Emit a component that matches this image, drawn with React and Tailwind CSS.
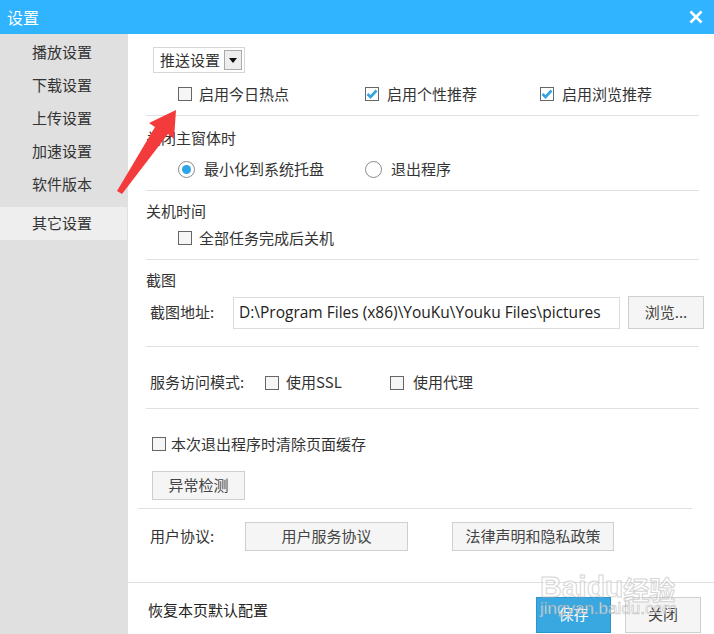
import React from 'react';

const cjk = { fontFamily: '"Noto Sans CJK SC", "Noto Sans", sans-serif' };

function Check({ checked }) {
    return (
        <span className={"inline-flex w-[14px] h-[14px] shrink-0 items-center justify-center border border-[#666] " + (checked ? "bg-white" : "bg-[#f6f6f6]")}>
            {checked && (
                <svg width="12" height="12" viewBox="0 0 12 12">
                    <path d="M1.5 6 L4.5 9 L10.5 2.5" stroke="#36a3df" strokeWidth="2.6" fill="none" />
                </svg>
            )}
        </span>
    );
}

function Radio({ on }) {
    return (
        <span className="inline-flex w-[17px] h-[17px] shrink-0 items-center justify-center rounded-full border border-[#8a8a8a] bg-white">
            {on && <span className="w-[9px] h-[9px] rounded-full bg-[#2ea4e8]" />}
        </span>
    );
}

function Btn({ children, className = "" }) {
    return (
        <div className={"flex items-center justify-center border border-[#cfcfcf] bg-[#f5f5f5] text-[15px] text-[#444] " + className}>
            {children}
        </div>
    );
}

export default function App() {
    const menu = ['播放设置', '下载设置', '上传设置', '加速设置', '软件版本'];

    return (
        <div className="relative w-[714px] h-[634px] overflow-hidden bg-white text-[#333] text-[15px]" style={cjk}>
            {/* title bar */}
            <div className="h-[34px] bg-[#30b4ff] flex items-center justify-between pl-[7px] pr-[11px]">
                <span className="text-white text-[16px]">设置</span>
                <svg width="14" height="14" viewBox="0 0 14 14">
                    <path d="M1.5 1.5 L12.5 12.5 M12.5 1.5 L1.5 12.5" stroke="white" strokeWidth="2.6" />
                </svg>
            </div>

            <div className="flex h-[600px]">
                {/* sidebar */}
                <div className="w-[128px] shrink-0 bg-[#e0e0e0] pt-[2px]">
                    {menu.map(m => (
                        <div key={m} className="h-[33px] flex items-center pl-[32px] text-[#333]">{m}</div>
                    ))}
                    <div className="mt-[6px] h-[33px] w-[127px] flex items-center pl-[32px] bg-[#eeeeee]">其它设置</div>
                </div>

                {/* content */}
                <div className="flex-1 flex flex-col">
                    <div className="flex flex-col pl-[18px] pr-[15px] flex-1">
                        {/* push */}
                        <div className="h-[82px] border-b border-[#e0e0e0] pt-[13px]">
                            <div className="ml-[7px] w-[92px] h-[26px] flex items-center justify-between border border-[#d6d6d6] bg-white pl-[6px] pr-[2px]">
                                <span>推送设置</span>
                                <span className="w-[18px] h-[20px] flex items-center justify-center border border-[#aaa] bg-[#eeeeee]">
                                    <svg width="8" height="5" viewBox="0 0 8 5"><path d="M0 0 H8 L4 5 Z" fill="#111" /></svg>
                                </span>
                            </div>
                            <div className="flex items-center h-[20px] mt-[11px] pl-[32px]">
                                <div className="w-[187px] flex items-center gap-[7px]"><Check />启用今日热点</div>
                                <div className="w-[175px] flex items-center gap-[8px]"><Check checked />启用个性推荐</div>
                                <div className="flex items-center gap-[8px]"><Check checked />启用浏览推荐</div>
                            </div>
                        </div>

                        {/* close window */}
                        <div className="h-[75px] border-b border-[#e0e0e0] pt-[11px]">
                            <div className="h-[22px] flex items-center">关闭主窗体时</div>
                            <div className="flex items-center h-[22px] mt-[9px] pl-[32px]">
                                <div className="w-[187px] flex items-center gap-[9px]"><Radio on />最小化到系统托盘</div>
                                <div className="flex items-center gap-[9px]"><Radio />退出程序</div>
                            </div>
                        </div>

                        {/* shutdown */}
                        <div className="h-[69px] border-b border-[#e0e0e0] pt-[9px]">
                            <div className="h-[22px] flex items-center">关机时间</div>
                            <div className="flex items-center h-[22px] mt-[5px] pl-[32px] gap-[7px]"><Check />全部任务完成后关机</div>
                        </div>

                        {/* screenshot */}
                        <div className="h-[87px] border-b border-[#e0e0e0] pt-[9px]">
                            <div className="h-[22px] flex items-center">截图</div>
                            <div className="flex items-center mt-[5px] pl-[4px] mr-[-10px]">
                                <span className="w-[83px]">截图地址:</span>
                                <div className="w-[387px] h-[32px] flex items-center border border-[#dcdcdc] pl-[5px] text-[15.5px] text-[#222]" style={{ fontFamily: '"Open Sans", "Noto Sans", sans-serif' }}>
                                    D:\Program Files (x86)\YouKu\Youku Files\pictures
                                </div>
                                <Btn className="ml-[8px] w-[76px] h-[33px]">浏览...</Btn>
                            </div>
                        </div>

                        {/* service mode */}
                        <div className="h-[62px] border-b border-[#e0e0e0] flex items-center pt-[10px] pl-[4px]">
                            <span className="w-[115px]">服务访问模式:</span>
                            <div className="w-[125px] flex items-center gap-[7px]"><Check />使用SSL</div>
                            <div className="flex items-center gap-[9px]"><Check />使用代理</div>
                        </div>

                        {/* cache */}
                        <div className="h-[100px] border-b border-[#e0e0e0] pt-[25px] pl-[6px] ml-[-8px] mr-[7px]">
                            <div className="flex items-center h-[20px] gap-[5px] pl-[8px]"><Check />本次退出程序时清除页面缓存</div>
                            <Btn className="mt-[17px] ml-[8px] w-[93px] h-[29px]">异常检测</Btn>
                        </div>

                        {/* agreement */}
                        <div className="h-[73px] flex items-start pt-[13px] pl-[4px]">
                            <span className="w-[95px] h-[28px] flex items-center">用户协议:</span>
                            <Btn className="w-[163px] h-[29px]">用户服务协议</Btn>
                            <Btn className="ml-[44px] w-[162px] h-[29px]">法律声明和隐私政策</Btn>
                        </div>
                    </div>

                    {/* footer */}
                    <div className="h-[52px] border-t border-[#e0e0e0] flex items-center pl-[20px] pr-[13px]">
                        <span className="flex-1 text-[#222] pt-[3px]">恢复本页默认配置</span>
                        <div className="w-[75px] h-[36px] mt-[12px] flex items-center justify-center bg-[#3aa8e0] border border-[#2a95d0] text-white">保存</div>
                        <Btn className="ml-[14px] w-[76px] h-[36px] mt-[12px]">关闭</Btn>
                    </div>
                </div>
            </div>

            {/* red annotation arrow */}
            <svg className="absolute left-0 top-0 pointer-events-none" width="714" height="634">
                <path d="M117 191 L155 127 L149 123 L176 110 L174 139 L168 134 L122 194 Z" fill="#f43b3b" />
            </svg>

            {/* watermark */}
            <div className="absolute left-[540px] top-[572px] pointer-events-none opacity-60 flex items-end">
                <span className="text-[30px] font-bold text-white leading-none" style={{ fontFamily: '"Liberation Sans", sans-serif', WebkitTextStroke: '1px #bbb' }}>Baidu</span>
                <span className="text-[26px] font-bold text-white leading-none" style={{ WebkitTextStroke: '1px #bbb' }}>经验</span>
            </div>
            <div className="absolute left-[540px] top-[600px] pointer-events-none opacity-70 text-[17px] text-white leading-none" style={{ fontFamily: '"Liberation Sans", sans-serif', WebkitTextStroke: '0.5px #999' }}>
                jingyan.baidu.com
            </div>
        </div>
    );
}
